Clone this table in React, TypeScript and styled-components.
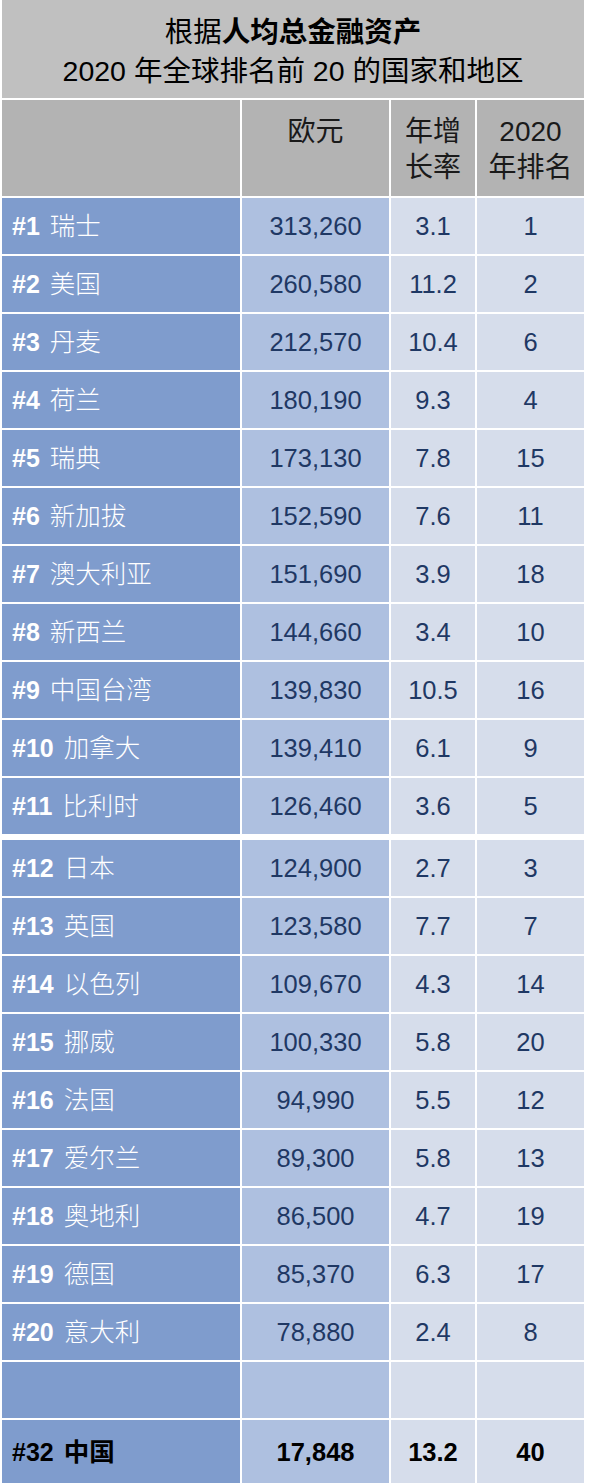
import React from 'react';
import styled, { createGlobalStyle } from 'styled-components';

const GlobalStyle = createGlobalStyle`
  html, body {
    margin: 0;
    padding: 0;
    background: #ffffff;
  }
  body {
    font-family: "Liberation Sans", "Noto Sans CJK SC", sans-serif;
  }
`;

const COLUMNS = '238px 147px 84px 107px';

const Table = styled.div`
  display: flex;
  flex-direction: column;
  gap: 2px;
  padding-left: 2px;
  width: 582px;
`;

const TitleCell = styled.div`
  height: 98px;
  box-sizing: border-box;
  padding-top: 13px;
  background: #c0c0c0;
  color: #000000;
  text-align: center;
  font-size: 28.5px;
  line-height: 39px;
`;

const Strong = styled.b`
  font-weight: 700;
`;

const Row = styled.div<{ $height: number; $spaced?: boolean }>`
  display: grid;
  grid-template-columns: ${COLUMNS};
  column-gap: 2px;
  height: ${(p) => p.$height}px;
  margin-top: ${(p) => (p.$spaced ? 4 : 0)}px;
`;

const HeaderCell = styled.div`
  background: #b3b3b3;
  color: #1a1a1a;
  text-align: center;
  font-size: 28px;
  line-height: 36px;
  padding-top: 14px;
`;

const NameCell = styled.div<{ $bold?: boolean }>`
  display: flex;
  align-items: center;
  padding-left: 10px;
  background: #7f9ccd;
  color: ${(p) => (p.$bold ? '#000000' : '#ffffff')};
  font-size: 25.5px;
  line-height: 30px;
  font-weight: ${(p) => (p.$bold ? 700 : 300)};
`;

const Label = styled.span`
  white-space: nowrap;
`;

const Rank = styled.span`
  font-weight: 700;
  font-size: 25px;
  margin-right: 10px;
`;

const ValueCell = styled.div<{ $tone: 'mid' | 'light'; $bold?: boolean }>`
  display: flex;
  align-items: center;
  justify-content: center;
  background: ${(p) => (p.$tone === 'mid' ? '#aec0e0' : '#d6ddeb')};
  color: ${(p) => (p.$bold ? '#000000' : '#1f3864')};
  font-size: 25.5px;
  font-weight: ${(p) => (p.$bold ? 700 : 400)};
`;

type Entry = { rank: string; name: string; euro: string; growth: string; pos: string };

const topRows: Entry[] = [
  { rank: '#1', name: '瑞士', euro: '313,260', growth: '3.1', pos: '1' },
  { rank: '#2', name: '美国', euro: '260,580', growth: '11.2', pos: '2' },
  { rank: '#3', name: '丹麦', euro: '212,570', growth: '10.4', pos: '6' },
  { rank: '#4', name: '荷兰', euro: '180,190', growth: '9.3', pos: '4' },
  { rank: '#5', name: '瑞典', euro: '173,130', growth: '7.8', pos: '15' },
  { rank: '#6', name: '新加拔', euro: '152,590', growth: '7.6', pos: '11' },
  { rank: '#7', name: '澳大利亚', euro: '151,690', growth: '3.9', pos: '18' },
  { rank: '#8', name: '新西兰', euro: '144,660', growth: '3.4', pos: '10' },
  { rank: '#9', name: '中国台湾', euro: '139,830', growth: '10.5', pos: '16' },
  { rank: '#10', name: '加拿大', euro: '139,410', growth: '6.1', pos: '9' },
  { rank: '#11', name: '比利时', euro: '126,460', growth: '3.6', pos: '5' },
];

const lowerRows: Entry[] = [
  { rank: '#12', name: '日本', euro: '124,900', growth: '2.7', pos: '3' },
  { rank: '#13', name: '英国', euro: '123,580', growth: '7.7', pos: '7' },
  { rank: '#14', name: '以色列', euro: '109,670', growth: '4.3', pos: '14' },
  { rank: '#15', name: '挪威', euro: '100,330', growth: '5.8', pos: '20' },
  { rank: '#16', name: '法国', euro: '94,990', growth: '5.5', pos: '12' },
  { rank: '#17', name: '爱尔兰', euro: '89,300', growth: '5.8', pos: '13' },
  { rank: '#18', name: '奥地利', euro: '86,500', growth: '4.7', pos: '19' },
  { rank: '#19', name: '德国', euro: '85,370', growth: '6.3', pos: '17' },
  { rank: '#20', name: '意大利', euro: '78,880', growth: '2.4', pos: '8' },
];

function DataRow({ entry, spaced, bold, height = 56 }: { entry: Entry; spaced?: boolean; bold?: boolean; height?: number }) {
  return (
    <Row $height={height} $spaced={spaced}>
      <NameCell $bold={bold}>
        <Label>
          <Rank>{entry.rank}</Rank>
          {entry.name}
        </Label>
      </NameCell>
      <ValueCell $tone="mid" $bold={bold}>{entry.euro}</ValueCell>
      <ValueCell $tone="light" $bold={bold}>{entry.growth}</ValueCell>
      <ValueCell $tone="light" $bold={bold}>{entry.pos}</ValueCell>
    </Row>
  );
}

export default function App() {
  return (
    <>
      <GlobalStyle />
      <Table>
        <TitleCell>
          根据<Strong>人均总金融资产</Strong>
          <br />
          2020 年全球排名前 20 的国家和地区
        </TitleCell>
        <Row $height={96}>
          <HeaderCell />
          <HeaderCell>欧元</HeaderCell>
          <HeaderCell>
            年增
            <br />
            长率
          </HeaderCell>
          <HeaderCell>
            2020
            <br />
            年排名
          </HeaderCell>
        </Row>
        {topRows.map((e) => (
          <DataRow key={e.rank} entry={e} />
        ))}
        {lowerRows.map((e, i) => (
          <DataRow key={e.rank} entry={e} spaced={i === 0} />
        ))}
        <Row $height={56}>
          <NameCell />
          <ValueCell $tone="mid" />
          <ValueCell $tone="light" />
          <ValueCell $tone="light" />
        </Row>
        <DataRow entry={{ rank: '#32', name: '中国', euro: '17,848', growth: '13.2', pos: '40' }} bold height={64} />
      </Table>
    </>
  );
}
